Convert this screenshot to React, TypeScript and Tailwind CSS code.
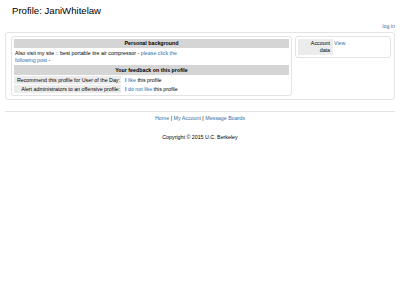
export default function App() {
  const link = "text-[#2f6faa]";
  return (
    <div
      className="w-[400px] h-[300px] bg-white text-black text-[5.3px] leading-[7px]"
      style={{ fontFamily: '"Liberation Sans", Arial, sans-serif' }}
    >
      <div className="pl-[12px] pt-[5px] text-[9.6px] leading-[12px]">Profile: JaniWhitelaw</div>
      <div className={`text-right pr-[5px] mt-[6px] ${link}`}>log in</div>
      <div className="mx-[5px] mt-[2px] border border-[#e3e3e3] rounded-[3px] p-[3px] pl-[5px] flex gap-[3px]">
        <div className="flex-1 border border-[#e3e3e3] rounded-[3px] p-[2px] pb-[2px]">
          <div className="bg-[#d5d5d5] text-center font-bold mb-[2px] h-[9px] leading-[9px]">
            Personal background
          </div>
          <div className="px-[1px] pb-[1px]">
            <div>
              Also visit my site :: best portable tire air compressor -{" "}
              <span className={link}>please click the</span>
            </div>
            <div>
              <span className={link}>following post</span> -
            </div>
          </div>
          <div className="bg-[#d5d5d5] text-center font-bold h-[10px] leading-[10px] mb-[1px]">
            Your feedback on this profile
          </div>
          <div className="flex gap-[4px] mb-[1px]">
            <div className="w-[107px] bg-[#ececec] text-right pr-[1px] h-[8px] leading-[8px]">
              Recommend this profile for User of the Day:
            </div>
            <div className="leading-[8px]">
              I <span className={link}>like</span> this profile
            </div>
          </div>
          <div className="flex gap-[4px]">
            <div className="w-[107px] bg-[#ececec] text-right pr-[1px] h-[8px] leading-[8px]">
              Alert administrators to an offensive profile:
            </div>
            <div className="leading-[8px]">
              I <span className={link}>do not like</span> this profile
            </div>
          </div>
        </div>
        <div className="w-[96px] self-start border border-[#e3e3e3] rounded-[3px] p-[2px] flex gap-[1px]">
          <div className="w-[35px] bg-[#ececec] text-right px-[3px] py-[1px]">
            <div>Account</div>
            <div>data</div>
          </div>
          <div className={`${link} py-[1px]`}>View</div>
        </div>
      </div>
      <div className="mx-[5px] mt-[11px] border-t border-[#e3e3e3]" />
      <div className="text-center mt-[3px]">
        <span className={link}>Home</span> | <span className={link}>My Account</span> |{" "}
        <span className={link}>Message Boards</span>
      </div>
      <div className="text-center mt-[12px]">Copyright © 2015 U.C. Berkeley</div>
    </div>
  );
}
